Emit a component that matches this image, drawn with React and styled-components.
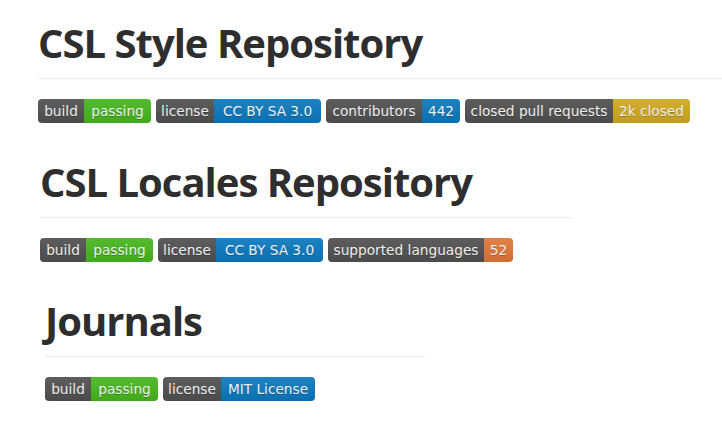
import React from "react";
import styled, { createGlobalStyle } from "styled-components";

const GlobalStyle = createGlobalStyle`
  html, body {
    margin: 0;
    padding: 0;
    background: #ffffff;
  }
  body {
    width: 722px;
    height: 435px;
    overflow: hidden;
  }
`;

const Page = styled.main`
  display: flex;
  flex-direction: column;
  padding-top: 18px;
`;

const Section = styled.section`
  display: flex;
  flex-direction: column;
  margin-left: ${(p) => p.$left}px;
  width: ${(p) => p.$rule}px;
  margin-top: ${(p) => p.$top}px;
`;

const Heading = styled.h1`
  margin: 0;
  padding-bottom: 10px;
  border-bottom: 1px solid #ececec;
  font-family: "Open Sans", "Noto Sans", sans-serif;
  font-weight: 700;
  font-size: 40px;
  line-height: 50px;
  color: #2e2e2e;
  letter-spacing: -1px;
  white-space: nowrap;
`;

const BadgeRow = styled.div`
  display: flex;
  gap: 5px;
  margin-top: 20px;
`;

const Badge = styled.span`
  display: inline-flex;
  height: 24px;
  border-radius: 4px;
  overflow: hidden;
  position: relative;
  &::after {
    content: "";
    position: absolute;
    inset: 0;
    background: linear-gradient(
      to bottom,
      rgba(187, 187, 187, 0.1),
      rgba(0, 0, 0, 0.1)
    );
    pointer-events: none;
  }
`;

const Part = styled.span`
  display: flex;
  align-items: center;
  justify-content: center;
  width: ${(p) => p.$w}px;
  background: ${(p) => p.$bg};
  color: #ffffff;
  font-family: "DejaVu Sans", Verdana, sans-serif;
  font-size: 13.7px;
  white-space: nowrap;
  text-shadow: 0 1px 0 rgba(1, 1, 1, 0.25);
`;

const GRAY = "#535353";
const GREEN = "#48bc1e";
const BLUE = "#0b7cc2";
const YELLOW = "#d7ae20";
const ORANGE = "#e77a3a";

const sections = [
  {
    title: "CSL Style Repository",
    left: 38,
    rule: 684,
    top: 0,
    badges: [
      ["build", 46, "passing", 67, GREEN],
      ["license", 58, "CC BY SA 3.0", 107, BLUE],
      ["contributors", 96, "442", 38, BLUE],
      ["closed pull requests", 148, "2k closed", 77, YELLOW],
    ],
  },
  {
    title: "CSL Locales Repository",
    left: 40,
    rule: 532,
    top: 34,
    badges: [
      ["build", 46, "passing", 67, GREEN],
      ["license", 58, "CC BY SA 3.0", 107, BLUE],
      ["supported languages", 156, "52", 29, ORANGE],
    ],
  },
  {
    title: "Journals",
    left: 45,
    rule: 380,
    top: 34,
    badges: [
      ["build", 46, "passing", 67, GREEN],
      ["license", 58, "MIT License", 94, BLUE],
    ],
  },
];

export default function App() {
  return (
    <>
      <GlobalStyle />
      <Page>
        {sections.map((s) => (
          <Section key={s.title} $left={s.left} $rule={s.rule} $top={s.top}>
            <Heading>{s.title}</Heading>
            <BadgeRow>
              {s.badges.map(([label, lw, value, vw, color]) => (
                <Badge key={label}>
                  <Part $w={lw} $bg={GRAY}>{label}</Part>
                  <Part $w={vw} $bg={color}>{value}</Part>
                </Badge>
              ))}
            </BadgeRow>
          </Section>
        ))}
      </Page>
    </>
  );
}
